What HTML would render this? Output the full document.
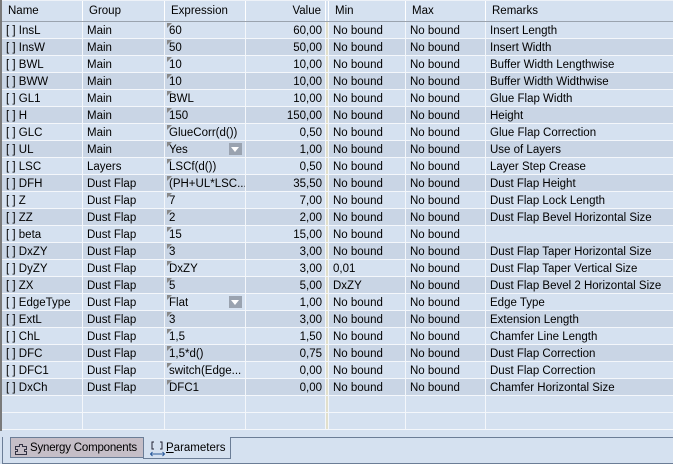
<!DOCTYPE html>
<html><head><meta charset="utf-8"><style>
*{margin:0;padding:0;box-sizing:border-box}
body{width:673px;height:464px;overflow:hidden;background:#d5e1f0;font-family:"Liberation Sans",Tahoma,sans-serif;font-size:11.5px;color:#000;position:relative}
#g{position:absolute;left:0;top:0;width:673px;height:431px;background:#d5e1f0;border-left:2px solid #7a7a7a}
.r{position:absolute;left:0;width:673px;height:17px;border-bottom:1px solid #f4f7fb}
.r div{position:absolute;top:0;height:16px;line-height:18px;white-space:nowrap;overflow:hidden;border-right:1px solid #f4f7fb;padding-left:4px}
.h{height:22px;background:#d5e1f0;border-bottom:1px solid #9aa3ae;border-top:1px solid #eef2f8}
.h div{height:20px;line-height:21px;top:0;border-right:1px solid #fff;padding-left:6px}
.e{background:#c9d5e5}
.c0{left:0;width:81px}.c1{left:81px;width:82px}.c2{left:163px;width:81px}.c3{left:244px;width:80px;text-align:right;padding-right:3px}.c4{left:324px;width:3px;padding:0!important;background:#e2e0cc}.c5{left:327px;width:77px}.c6{left:404px;width:80px}.c7{left:484px;width:189px}
.c2 i{position:absolute;left:2px;top:1px;width:0;height:0;border-top:5px solid #888;border-right:5px solid transparent}
.dd{position:absolute;right:3px;top:2px;width:13px;height:12px;background:#9aa3b0}
.dd:after{content:"";position:absolute;left:2px;top:4px;border-left:4.5px solid transparent;border-right:4.5px solid transparent;border-top:5px solid #fff}
#tabs{position:absolute;left:0;top:431px;width:673px;height:33px;background:#d5e1f0}
#line{position:absolute;left:230px;right:0;top:6px;border-top:1px solid #6b7d96}
#bl{position:absolute;left:2px;right:0;bottom:0;border-top:1px solid #6b7d96}
#lb{position:absolute;left:2px;top:6px;bottom:0;border-left:1px solid #6b7d96}
.t{position:absolute;top:6px;height:21px;line-height:20px;font-size:11.5px;white-space:nowrap;overflow:hidden}
#t1{left:10px;width:134px;background:#c5bec7;border:1px solid #6b7d96;padding-left:19px;letter-spacing:-0.2px}
#t2{left:143px;width:88px;border:1px solid #6b7d96;border-left:none;border-top:none;padding-left:23px;top:7px}
</style></head><body>
<div id="g">
<div class="r h" style="top:0"><div class="c0">Name</div><div class="c1">Group</div><div class="c2">Expression</div><div class="c3" style="padding-right:4px">Value</div><div class="c4" style="background:#d5e1f0"></div><div class="c5">Min</div><div class="c6">Max</div><div class="c7">Remarks</div></div>
</div>
<div id="tabs"><div id="lb"></div><div id="line"></div><div id="bl"></div>
<div class="t" id="t1"><svg style="position:absolute;left:3px;top:3px" width="16" height="15" viewBox="0 0 16 15" fill="none" stroke="#334" stroke-width="1"><path d="M1.5 5.5h4v-2h3v2h4v3h-2v2h2v3h-11v-3h2v-2h-2z"/></svg>Synergy Components</div>
<div class="t" id="t2"><svg style="position:absolute;left:7px;top:2px" width="16" height="17" viewBox="0 0 16 17" fill="none" stroke="#223" stroke-width="1"><path d="M4 2h-2v7h2M10 2h2v7h-2"/><path d="M0.5 14h14M2.5 12l-2 2 2 2M12.5 12l2 2-2 2" stroke="#2a5a9a"/></svg><u>P</u>arameters</div>
</div>
<script>
var d=[["InsL","Main","60","60,00","No bound","No bound","Insert Length"],
["InsW","Main","50","50,00","No bound","No bound","Insert Width"],
["BWL","Main","10","10,00","No bound","No bound","Buffer Width Lengthwise"],
["BWW","Main","10","10,00","No bound","No bound","Buffer Width Widthwise"],
["GL1","Main","BWL","10,00","No bound","No bound","Glue Flap Width"],
["H","Main","150","150,00","No bound","No bound","Height"],
["GLC","Main","GlueCorr(d())","0,50","No bound","No bound","Glue Flap Correction"],
["UL","Main","Yes","1,00","No bound","No bound","Use of Layers",1],
["LSC","Layers","LSCf(d())","0,50","No bound","No bound","Layer Step Crease"],
["DFH","Dust Flap","(PH+UL*LSC...","35,50","No bound","No bound","Dust Flap Height"],
["Z","Dust Flap","7","7,00","No bound","No bound","Dust Flap Lock Length"],
["ZZ","Dust Flap","2","2,00","No bound","No bound","Dust Flap Bevel Horizontal Size"],
["beta","Dust Flap","15","15,00","No bound","No bound",""],
["DxZY","Dust Flap","3","3,00","No bound","No bound","Dust Flap Taper Horizontal Size"],
["DyZY","Dust Flap","DxZY","3,00","0,01","No bound","Dust Flap Taper Vertical Size"],
["ZX","Dust Flap","5","5,00","DxZY","No bound","Dust Flap Bevel 2 Horizontal Size"],
["EdgeType","Dust Flap","Flat","1,00","No bound","No bound","Edge Type",1],
["ExtL","Dust Flap","3","3,00","No bound","No bound","Extension Length"],
["ChL","Dust Flap","1,5","1,50","No bound","No bound","Chamfer Line Length"],
["DFC","Dust Flap","1,5*d()","0,75","No bound","No bound","Dust Flap Correction"],
["DFC1","Dust Flap","switch(Edge...","0,00","No bound","No bound","Dust Flap Correction"],
["DxCh","Dust Flap","DFC1","0,00","No bound","No bound","Chamfer Horizontal Size"],
["","","","","","",""],["","","","","","",""]];
var h="";
d.forEach(function(r,i){var y=22+i*17,blank=!r[0];
h+='<div class="r'+(i%2?' e':'')+'" style="top:'+y+'px'+(blank?';background:#d5e1f0':'')+'">'+
'<div class="c0">'+(blank?'':'[ ]&nbsp;'+r[0])+'</div><div class="c1">'+r[1]+'</div><div class="c2">'+(blank?'':'<i></i>')+r[2]+(r[7]?'<span class="dd"></span>':'')+'</div><div class="c3">'+r[3]+'</div><div class="c4"></div><div class="c5">'+r[4]+'</div><div class="c6">'+r[5]+'</div><div class="c7">'+r[6]+'</div></div>';});
document.getElementById("g").insertAdjacentHTML("beforeend",h);
</script>
</body></html>
